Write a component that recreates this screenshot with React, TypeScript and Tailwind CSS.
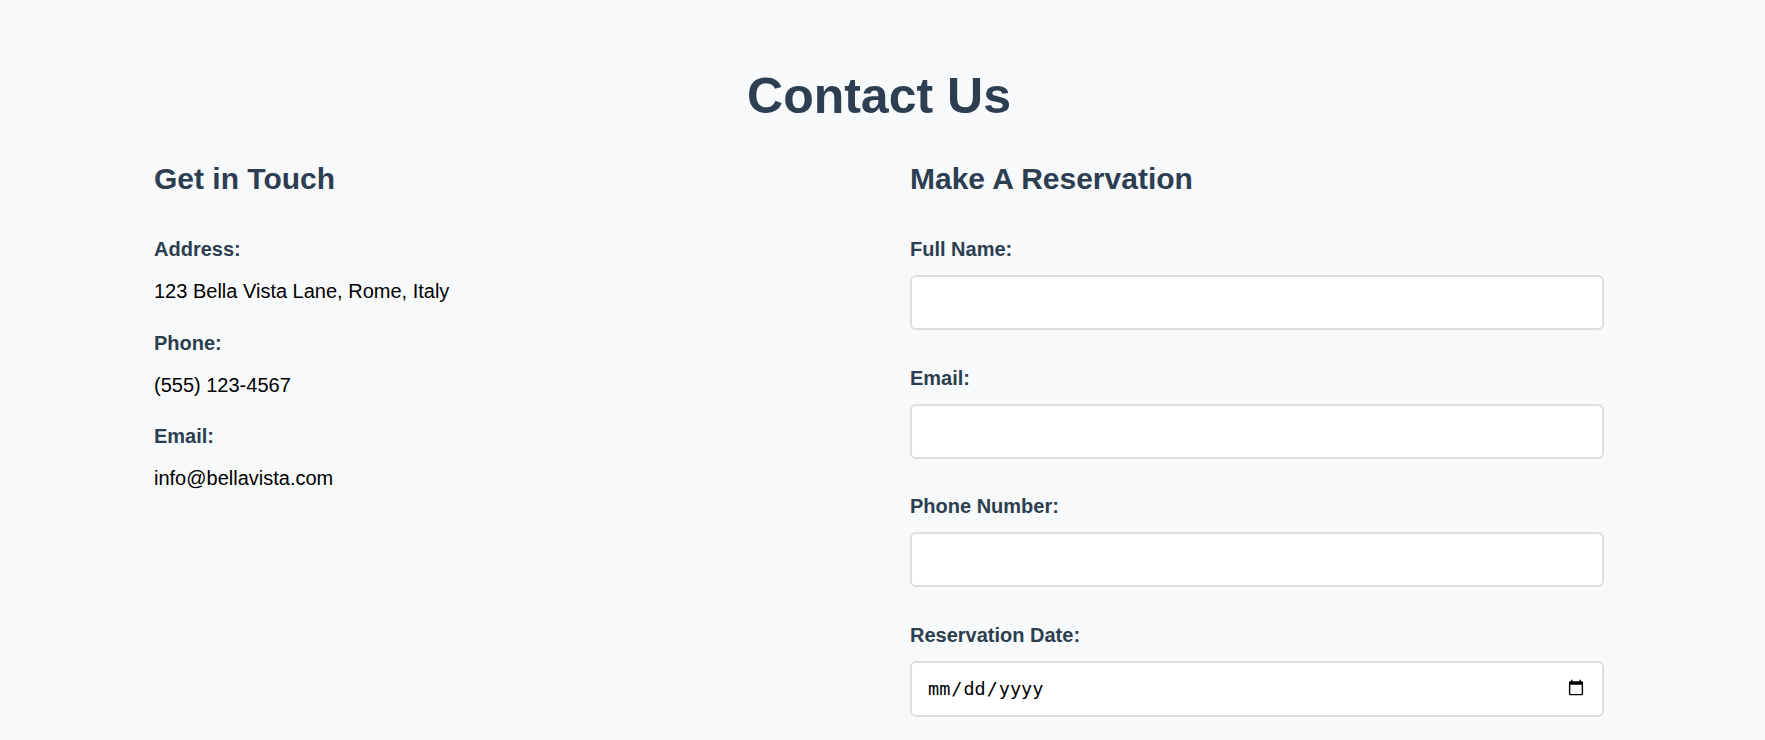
import React from "react";

const contactItems = [
  { label: "Address:", value: "123 Bella Vista Lane, Rome, Italy" },
  { label: "Phone:", value: "(555) 123-4567" },
  { label: "Email:", value: "info@bellavista.com" },
];

const fields = [
  { id: "name", label: "Full Name:", type: "text" },
  { id: "email", label: "Email:", type: "email" },
  { id: "phone", label: "Phone Number:", type: "tel" },
];

function ContactInfo() {
  return (
    <div>
      <h2 className="text-[30px] font-bold leading-[normal] text-[#2c3e50]">
        Get in Touch
      </h2>
      <div className="mt-[42px] flex flex-col gap-[28.5px]">
        {contactItems.map((item) => (
          <div key={item.label}>
            <h4 className="text-[20px] font-bold leading-[normal] text-[#2c3e50]">
              {item.label}
            </h4>
            <p className="mt-[19px] text-[20px] leading-[normal] text-black">
              {item.value}
            </p>
          </div>
        ))}
      </div>
    </div>
  );
}

function ReservationForm() {
  return (
    <form onSubmit={(e) => e.preventDefault()}>
      <h2 className="text-[30px] font-bold leading-[normal] text-[#2c3e50]">
        Make A Reservation
      </h2>
      <div className="mt-[42px] flex flex-col gap-[36.5px]">
        {fields.map((f) => (
          <div key={f.id}>
            <label
              htmlFor={f.id}
              className="block text-[20px] font-bold leading-[normal] text-[#2c3e50]"
            >
              {f.label}
            </label>
            <input
              id={f.id}
              type={f.type}
              className="mt-[14px] block h-[55px] w-full rounded-[6px] border-2 border-[#dedede] bg-white px-[15px] text-[20px] outline-none"
            />
          </div>
        ))}
        <div>
          <label
            htmlFor="date"
            className="block text-[20px] font-bold leading-[normal] text-[#2c3e50]"
          >
            Reservation Date:
          </label>
          <input
            id="date"
            type="date"
            className="mt-[14px] block h-[56px] w-full rounded-[6px] border-2 border-[#dedede] bg-white px-[15px] font-['DejaVu_Sans_Mono',monospace] text-[18.5px] text-black outline-none"
          />
        </div>
      </div>
    </form>
  );
}

export default function App() {
  return (
    <div className="min-h-screen overflow-hidden bg-[#f8f9fa] font-['Liberation_Sans',Arial,sans-serif]">
      <section className="pl-[154px] pr-[161px] pt-[67px]">
        <h1 className="text-center text-[50px] font-bold leading-[normal] text-[#2c3e50]">
          Contact Us
        </h1>
        <div className="mt-[37px] grid grid-cols-2 gap-x-[62px]">
          <ContactInfo />
          <ReservationForm />
        </div>
      </section>
    </div>
  );
}
